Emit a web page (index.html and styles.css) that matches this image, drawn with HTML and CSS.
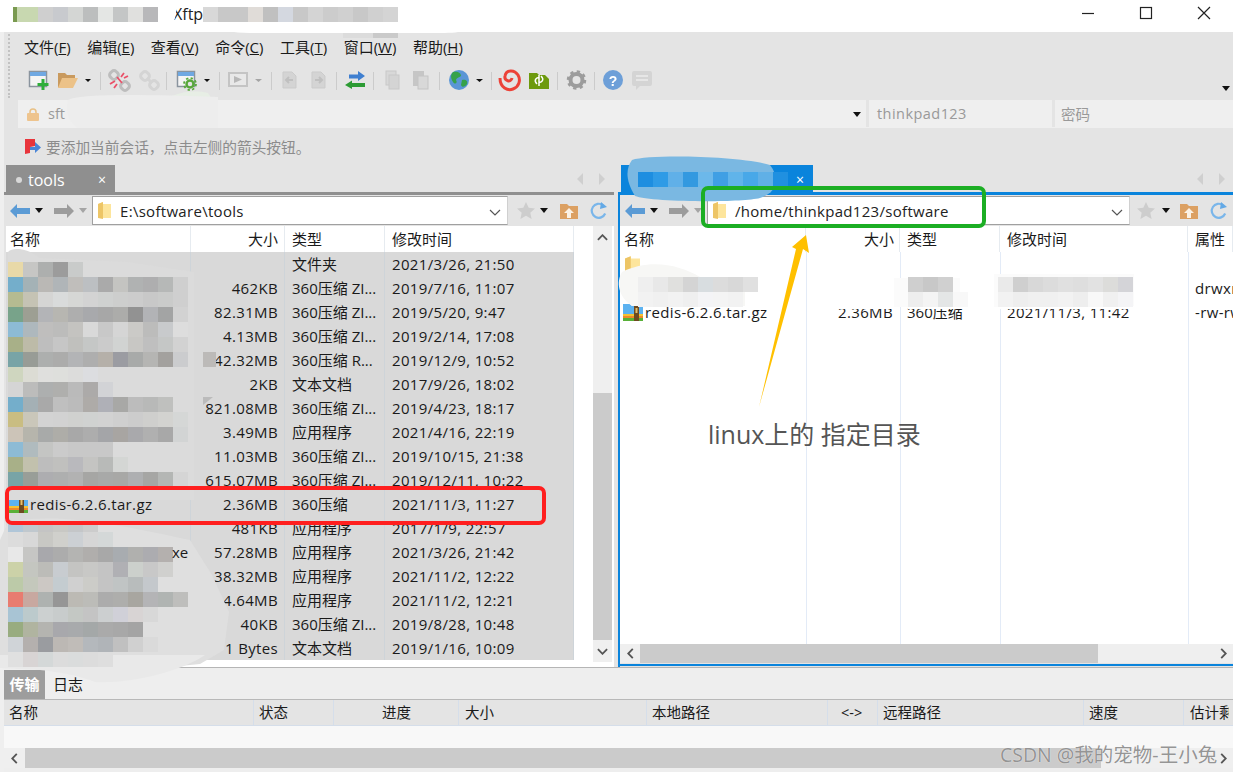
FILE: index.html
```html
<!DOCTYPE html>
<html lang="zh-CN">
<head>
<meta charset="utf-8">
<title>Xftp</title>
<link rel="stylesheet" href="styles.css">
</head>
<body>
<svg class="defs" width="0" height="0" aria-hidden="true">
  <defs>
    <symbol id="i-back" viewBox="0 0 20 14"><polygon points="0,7 7,0 7,4 20,4 20,10 7,10 7,14" fill="#5b9bd5"/></symbol>
    <symbol id="i-fwd" viewBox="0 0 20 14"><polygon points="20,7 13,0 13,4 0,4 0,10 13,10 13,14" fill="#9c9c9c"/></symbol>
    <symbol id="i-caret" viewBox="0 0 8 5"><polygon points="0,0 8,0 4,5" fill="#111"/></symbol>
    <symbol id="i-caret-g" viewBox="0 0 8 5"><polygon points="0,0 8,0 4,5" fill="#a5a5a5"/></symbol>
    <symbol id="i-folder" viewBox="0 0 13 17"><path d="M0 2 L5 0 L5 2 L13 2 L13 16 L0 16Z" fill="#fde59c"/><path d="M0 2 L5 0 L5 17 L0 16Z" fill="#edc566"/></symbol>
    <symbol id="i-chev" viewBox="0 0 12 7"><polyline points="1,1 6,6 11,1" fill="none" stroke="#555" stroke-width="1.2"/></symbol>
    <symbol id="i-star" viewBox="0 0 18 17"><polygon points="9,0 11.7,5.8 18,6.5 13.3,10.8 14.6,17 9,13.8 3.4,17 4.7,10.8 0,6.5 6.3,5.8" fill="#cdcdcd"/></symbol>
    <symbol id="i-home" viewBox="0 0 18 16"><path d="M0 1H7L9 3H18V16H0Z" fill="#dca062"/><polygon points="9,5 14,10 11,10 11,15 7,15 7,10 4,10" fill="#fbf1e4"/></symbol>
    <symbol id="i-refresh" viewBox="0 0 18 18"><path d="M15.2 11.5A7 7 0 1 1 13 3.2" fill="none" stroke="#7ab6ea" stroke-width="2.2"/><polygon points="11,0 17,5 10,7" fill="#63a9e6"/></symbol>
    <symbol id="i-zip" viewBox="0 0 20 18"><path d="M0 1H7L9 3H20V11H0Z" fill="#5cb2f0"/><rect y="11" width="20" height="2" fill="#f6c233"/><rect y="13" width="20" height="2" fill="#ef8a2a"/><rect y="15" width="20" height="3" fill="#58b038"/><rect x="11" width="5" height="18" fill="#6e4a20"/><rect x="12.500" y="5" width="2" height="5" fill="#e7c06a"/></symbol>
  </defs>
</svg>

<div class="app">
  <header class="titlebar">
    <span class="app-name">Xftp</span>
    <div class="win-controls">
      <svg class="win-btn" viewBox="0 0 14 14"><line x1="1" y1="7.5" x2="13" y2="7.5"/></svg>
      <svg class="win-btn" viewBox="0 0 14 14"><rect x="1.5" y="1.5" width="11" height="11"/></svg>
      <svg class="win-btn" viewBox="0 0 14 14"><path d="M1 1L13 13M13 1L1 13"/></svg>
    </div>
  </header>

  <nav class="menubar">
    <span class="grip"></span>
    <span class="menu-item">文件(<u>F</u>)</span>
    <span class="menu-item">编辑(<u>E</u>)</span>
    <span class="menu-item">查看(<u>V</u>)</span>
    <span class="menu-item">命令(<u>C</u>)</span>
    <span class="menu-item">工具(<u>T</u>)</span>
    <span class="menu-item">窗口(<u>W</u>)</span>
    <span class="menu-item">帮助(<u>H</u>)</span>
  </nav>

  <div class="toolbar">
    <span class="grip"></span>
    <svg class="tool-icons" viewBox="0 64 660 34" width="660" height="34">
      <g stroke="#cbcbcb"><path d="M100.500 72V90M166.500 72V90M219.500 72V90M271.500 72V90M336.500 72V90M373.500 72V90M439.500 72V90M491.500 72V90M557.500 72V90M594.500 72V90"/></g>
      <!-- new session -->
      <rect x="29.500" y="71.500" width="17" height="15" fill="#f4f4f4" stroke="#8a949e" stroke-width="1.500"/>
      <rect x="30" y="72" width="16" height="4" fill="#6fa8e2"/>
      <path d="M43 79V90M37.500 84.500H48.500" stroke="#2fae3a" stroke-width="3"/>
      <!-- open folder -->
      <path d="M58 73H65L67 75H75V79H64L58 88Z" fill="#c99a5e"/>
      <path d="M62 78H78L73 88H58Z" fill="#ecc288"/>
      <polygon points="85,79 91,79 88,82" fill="#111"/>
      <!-- disconnect -->
      <g fill="none" stroke="#bdbdbd" stroke-width="3"><rect x="110" y="71" width="8" height="8" rx="3" transform="rotate(45 114 75)"/><rect x="121" y="82" width="8" height="8" rx="3" transform="rotate(45 125 86)"/></g>
      <path d="M117 77L122 83M124 73L121 77M128 76L124 78M110 84L115 81M114 88L117 84" stroke="#ea5068" stroke-width="1.800"/>
      <!-- link -->
      <g fill="none" stroke="#d4d4d4" stroke-width="3"><rect x="141" y="72" width="8" height="8" rx="3" transform="rotate(45 145 76)"/><rect x="150" y="81" width="8" height="8" rx="3" transform="rotate(45 154 85)"/><path d="M147 78L152 83"/></g>
      <!-- session gear -->
      <rect x="177.500" y="71.500" width="17" height="15" fill="#f4f4f4" stroke="#8a949e" stroke-width="1.500"/>
      <rect x="178" y="72" width="16" height="4" fill="#6fa8e2"/>
      <circle cx="190" cy="84" r="3.500" fill="#e4e4e4" stroke="#58a83a" stroke-width="2.500"/>
      <circle cx="190" cy="84" r="6" fill="none" stroke="#58a83a" stroke-width="1.800" stroke-dasharray="2.300 2.400"/>
      <polygon points="204,79 210,79 207,82" fill="#111"/>
      <!-- play -->
      <rect x="229" y="73" width="18" height="13" fill="#e8e8e8" stroke="#c4c4c4" stroke-width="2"/>
      <polygon points="234,76 234,83 242,79.500" fill="#b8b8b8"/>
      <polygon points="255,79 262,79 258.500,82" fill="#a5a5a5"/>
      <!-- transfer docs -->
      <path d="M283 72H292L296 76V88H283Z" fill="#d4d4d4" stroke="#cbcbcb"/>
      <path d="M293 80H286M289 77L286 80L289 83" stroke="#c0c0c0" stroke-width="2" fill="none"/>
      <path d="M312 72H321L325 76V88H312Z" fill="#d4d4d4" stroke="#cbcbcb"/>
      <path d="M315 80H322M319 77L322 80L319 83" stroke="#c0c0c0" stroke-width="2" fill="none"/>
      <!-- swap -->
      <polygon points="345,85 352,80.500 352,83 365,83 365,87 352,87 352,89" fill="#2c9b34"/>
      <polygon points="349,74.500 358,74.500 358,71 365,76 358,81 358,78.500 349,78.500" fill="#3f7fd0"/>
      <!-- copy & paste -->
      <rect x="386" y="71" width="10" height="14" fill="#d8d8d8" stroke="#c8c8c8"/><rect x="389" y="75" width="10" height="14" fill="#d4d4d4" stroke="#c8c8c8"/>
      <rect x="413" y="71" width="11" height="15" fill="#c6c6c6"/><rect x="418" y="76" width="10" height="13" fill="#d8d8d8" stroke="#c4c4c4"/>
      <!-- globe -->
      <circle cx="459" cy="80" r="10" fill="#5a96d6"/>
      <path d="M453 72C458 71 461 73 461 76C459 78 457 77 456 80C458 83 455 85 453 82C451 79 450 75 453 72ZM462 80C466 79 468 81 467 84C465 87 462 88 461 85Z" fill="#36a24a"/>
      <polygon points="476,79 483,79 479.500,82" fill="#111"/>
      <!-- snail -->
      <path d="M500 78C500 88 508 91 513 89C519 87 521 80 518 75C514 69 506 70 505 76C504 81 511 83 512 78" fill="none" stroke="#ec4238" stroke-width="3"/>
      <!-- green folder -->
      <path d="M529 73H537L539 75H545L549 79V89H529Z" fill="#6d9a0d"/>
      <path d="M537 84C533 80 537 77 539 78M541 76C545 80 541 83 539 82M539 75V86" stroke="#fff" stroke-width="1.500" fill="none"/>
      <!-- gear -->
      <circle cx="576.500" cy="80" r="6" fill="none" stroke="#9c9c9c" stroke-width="4"/>
      <circle cx="576.500" cy="80" r="8.500" fill="none" stroke="#9c9c9c" stroke-width="2.500" stroke-dasharray="3.300 3.370"/>
      <!-- help -->
      <circle cx="613" cy="80" r="10" fill="#6d9fd8"/>
      <text class="help-mark" x="613" y="85.500" text-anchor="middle">?</text>
      <!-- comment -->
      <path d="M634 71H650Q652 71 652 73V84Q652 86 650 86H640L636 90V86H634Q632 86 632 84V73Q632 71 634 71Z" fill="#d4d4d4"/>
      <path d="M636 76H648M636 80H648" stroke="#ececec" stroke-width="1.500"/>
    </svg>
    <svg class="more-caret"><use href="#i-caret"/></svg>
  </div>

  <div class="addrbar">
    <div class="addr-field addr-host">
      <svg class="lock" viewBox="0 0 12 13"><path d="M3 6V4a3 3 0 0 1 6 0V6" fill="none" stroke="#e9c186" stroke-width="1.500"/><rect y="5" width="12" height="8" rx="1" fill="#eec48e"/></svg>
      <span>sft</span>
      <svg class="addr-caret"><use href="#i-caret"/></svg>
    </div>
    <div class="addr-field addr-user">thinkpad123</div>
    <div class="addr-field addr-pass">密码</div>
  </div>

  <div class="hint">
    <svg class="hint-icon" viewBox="0 0 16 15"><path d="M0 0H10V7L5 8V14L0 15Z" fill="#e8353c"/><polygon points="5,8 10,8 10,3 16,8.500 10,14 10,11 5,11" fill="#4a86d8"/></svg>
    <span>要添加当前会话，点击左侧的箭头按钮。</span>
  </div>

  <main class="panes">
    <section class="pane pane-left">
      <div class="tabrow">
        <div class="tab tab-local"><i class="tab-dot"></i><span class="tab-label">tools</span><span class="tab-x">×</span></div>
        <div class="tab-arrows"><b class="ar-l"></b><b class="ar-r"></b></div>
      </div>
      <div class="navrow">
        <svg class="n-arrow"><use href="#i-back"/></svg>
        <svg class="n-caret"><use href="#i-caret"/></svg>
        <svg class="n-arrow n-fwd"><use href="#i-fwd"/></svg>
        <svg class="n-caret"><use href="#i-caret-g"/></svg>
        <div class="pathbox">
          <svg class="p-folder"><use href="#i-folder"/></svg>
          <span class="p-text">E:\software\tools</span>
          <svg class="p-chev"><use href="#i-chev"/></svg>
        </div>
        <svg class="n-star"><use href="#i-star"/></svg>
        <svg class="n-caret"><use href="#i-caret"/></svg>
        <svg class="n-home"><use href="#i-home"/></svg>
        <svg class="n-refresh"><use href="#i-refresh"/></svg>
      </div>
      <div class="listwrap">
        <div class="list">
          <div class="row head cols-l"><span class="c-name">名称</span><span class="c-size">大小</span><span class="c-type">类型</span><span class="c-mod">修改时间</span></div>
          <div class="rows-sel">
            <div class="row cols-l"><span class="c-name"></span><span class="c-size"></span><span class="c-type">文件夹</span><span class="c-mod">2021/3/26, 21:50</span></div>
            <div class="row cols-l"><span class="c-name"></span><span class="c-size">462KB</span><span class="c-type">360压缩 ZI...</span><span class="c-mod">2019/7/16, 11:07</span></div>
            <div class="row cols-l"><span class="c-name"></span><span class="c-size">82.31MB</span><span class="c-type">360压缩 ZI...</span><span class="c-mod">2019/5/20, 9:47</span></div>
            <div class="row cols-l"><span class="c-name"></span><span class="c-size">4.13MB</span><span class="c-type">360压缩 ZI...</span><span class="c-mod">2019/2/14, 17:08</span></div>
            <div class="row cols-l"><span class="c-name"></span><span class="c-size">42.32MB</span><span class="c-type">360压缩 R...</span><span class="c-mod">2019/12/9, 10:52</span></div>
            <div class="row cols-l"><span class="c-name"></span><span class="c-size">2KB</span><span class="c-type">文本文档</span><span class="c-mod">2017/9/26, 18:02</span></div>
            <div class="row cols-l"><span class="c-name"></span><span class="c-size">821.08MB</span><span class="c-type">360压缩 ZI...</span><span class="c-mod">2019/4/23, 18:17</span></div>
            <div class="row cols-l"><span class="c-name"></span><span class="c-size">3.49MB</span><span class="c-type">应用程序</span><span class="c-mod">2021/4/16, 22:19</span></div>
            <div class="row cols-l"><span class="c-name"></span><span class="c-size">11.03MB</span><span class="c-type">360压缩 ZI...</span><span class="c-mod">2019/10/15, 21:38</span></div>
            <div class="row cols-l"><span class="c-name"></span><span class="c-size">615.07MB</span><span class="c-type">360压缩 ZI...</span><span class="c-mod">2019/12/11, 10:22</span></div>
            <div class="row cols-l"><span class="c-name with-icon"><svg class="zip"><use href="#i-zip"/></svg>redis-6.2.6.tar.gz</span><span class="c-size">2.36MB</span><span class="c-type">360压缩</span><span class="c-mod">2021/11/3, 11:27</span></div>
            <div class="row cols-l"><span class="c-name"></span><span class="c-size">481KB</span><span class="c-type">应用程序</span><span class="c-mod">2017/1/9, 22:57</span></div>
            <div class="row cols-l"><span class="c-name"></span><span class="c-size">57.28MB</span><span class="c-type">应用程序</span><span class="c-mod">2021/3/26, 21:42</span></div>
            <div class="row cols-l"><span class="c-name"></span><span class="c-size">38.32MB</span><span class="c-type">应用程序</span><span class="c-mod">2021/11/2, 12:22</span></div>
            <div class="row cols-l"><span class="c-name"></span><span class="c-size">4.64MB</span><span class="c-type">应用程序</span><span class="c-mod">2021/11/2, 12:21</span></div>
            <div class="row cols-l"><span class="c-name"></span><span class="c-size">40KB</span><span class="c-type">360压缩 ZI...</span><span class="c-mod">2019/8/28, 10:48</span></div>
            <div class="row cols-l"><span class="c-name"></span><span class="c-size">1 Bytes</span><span class="c-type">文本文档</span><span class="c-mod">2019/1/16, 10:09</span></div>
          </div>
        </div>
        <div class="vscroll">
          <div class="sb-btn"><svg class="sb-chev" viewBox="0 0 12 7"><polyline points="1,6 6,1 11,6"/></svg></div>
          <div class="vtrack"><div class="vthumb"></div></div>
          <div class="sb-btn"><svg class="sb-chev" viewBox="0 0 12 7"><polyline points="1,1 6,6 11,1"/></svg></div>
        </div>
      </div>
    </section>

    <section class="pane pane-right">
      <div class="tabrow">
        <div class="tab tab-remote"><span class="tab-x">×</span></div>
        <div class="tab-arrows"><b class="ar-l"></b><b class="ar-r"></b></div>
      </div>
      <div class="remote-body">
        <div class="navrow">
          <svg class="n-arrow"><use href="#i-back"/></svg>
          <svg class="n-caret"><use href="#i-caret"/></svg>
          <svg class="n-arrow n-fwd"><use href="#i-fwd"/></svg>
          <svg class="n-caret"><use href="#i-caret-g"/></svg>
          <div class="pathbox">
            <svg class="p-folder"><use href="#i-folder"/></svg>
            <span class="p-text">/home/thinkpad123/software</span>
            <svg class="p-chev"><use href="#i-chev"/></svg>
          </div>
          <svg class="n-star"><use href="#i-star"/></svg>
          <svg class="n-caret"><use href="#i-caret"/></svg>
          <svg class="n-home"><use href="#i-home"/></svg>
          <svg class="n-refresh"><use href="#i-refresh"/></svg>
        </div>
        <div class="list list-r">
          <div class="row head cols-r"><span class="c-name">名称</span><span class="c-size">大小</span><span class="c-type">类型</span><span class="c-mod">修改时间</span><span class="c-attr">属性</span></div>
          <div class="rows-r">
            <div class="row cols-r"><span class="c-name"><svg class="folder-big"><use href="#i-folder"/></svg></span><span></span><span></span><span></span><span></span></div>
            <div class="row cols-r"><span class="c-name"></span><span></span><span></span><span></span><span class="c-attr">drwxr-xr-x</span></div>
            <div class="row cols-r"><span class="c-name with-icon-r"><svg class="zip"><use href="#i-zip"/></svg>redis-6.2.6.tar.gz</span><span class="c-size">2.36MB</span><span class="c-type">360压缩</span><span class="c-mod">2021/11/3, 11:42</span><span class="c-attr">-rw-rw-r--</span></div>
          </div>
        </div>
        <div class="hscroll hscroll-r">
          <div class="sb-btn-h"><svg class="sb-chev-h" viewBox="0 0 7 12"><polyline points="6,1 1,6 6,11"/></svg></div>
          <div class="hthumb hthumb-r"></div>
          <div class="sb-rest"></div>
          <div class="sb-btn-h"><svg class="sb-chev-h" viewBox="0 0 7 12"><polyline points="1,1 6,6 1,11"/></svg></div>
        </div>
      </div>
    </section>
  </main>

  <section class="transfer">
    <div class="t-tabs"><span class="t-tab t-active">传输</span><span class="t-tab t-log">日志</span></div>
    <div class="t-head">
      <span class="t-c1">名称</span><span class="t-c2">状态</span><span class="t-c3">进度</span><span class="t-c4">大小</span><span class="t-c5">本地路径</span><span class="t-c6">&lt;-&gt;</span><span class="t-c7">远程路径</span><span class="t-c8">速度</span><span class="t-c9">估计剩余</span>
    </div>
    <div class="t-body"></div>
    <div class="hscroll hscroll-t">
      <div class="sb-btn-h sb-btn-t"><svg class="sb-chev-h" viewBox="0 0 7 12"><polyline points="6,1 1,6 6,11"/></svg></div>
      <div class="hthumb hthumb-t"></div>
      <div class="sb-rest"></div>
      <div class="sb-btn-h"><svg class="sb-chev-h" viewBox="0 0 7 12"><polyline points="1,1 6,6 1,11"/></svg></div>
    </div>
  </section>

  <svg class="overlay" viewBox="0 0 1233 772" width="1233" height="772">
    <!-- white / grey smears that hide private data -->
    <path d="M15 0H176C178 18 172 32 160 32H40C20 32 13 16 15 0Z" fill="#fff"/>
    <path d="M200 0H470V22C470 30 465 33 440 33H250C215 33 200 20 200 0Z" fill="#fff"/>
    <path d="M343 33H373V38H343Z" fill="#dcdcdc"/>
    <path d="M373 33H398V38H373Z" fill="#cacaca"/>
    <path d="M170 97C180 92 195 90 208 93L212 99H170Z" fill="#e7eee5"/>
    <path d="M68 100C85 93 150 95 218 97V128H78C68 122 65 110 68 100Z" fill="#ededed"/>
    <path d="M8 252C14 246 30 250 40 258L128 262L194 272V500H6Z" fill="#dbdbdb"/>
    <path d="M8 522C60 512 120 525 190 540L212 575L229 612L224 650L200 664C140 670 60 670 30 666L0 660V540Z" fill="#dfdfdf"/>
    <path d="M0 655H205C180 672 130 684 95 682C80 676 60 672 40 670L0 668Z" fill="#e9e9e9"/>
    <path d="M632 160C650 154 740 156 770 165C780 178 778 192 760 198C740 203 650 202 635 196C625 180 626 168 632 160Z" fill="#7ab8e2"/>
    <path d="M622 272C650 258 680 265 700 277L745 277V306H632C618 296 616 282 622 272Z" fill="#f7f7f5"/>
    <path d="M894 278H960V307H894ZM994 274H1134V307H994Z" fill="#fbfbfb"/>
    <path d="M838 302H893V309H838ZM908 306H968V309H908ZM998 306H1134V309H998Z" fill="#fff"/>
    <g id="mosaic" shape-rendering="crispEdges"></g>
    <polygon points="203,397 213,397 203,405" fill="#bbb"/>
    <text class="tail-text" x="172" y="558">xe</text>
    <!-- annotations -->
    <rect x="7" y="488" width="537" height="35" rx="5" class="mark mark-red"/>
    <rect x="703" y="188" width="281" height="38" rx="5" class="mark mark-green"/>
    <polygon points="806,235 809,253 803,249 759,407 796,249 792,247" fill="#ffc000"/>
  </svg>
  <div class="note">linux上的 指定目录</div>
  <div class="watermark">CSDN @我的宠物-王小兔</div>
</div>
<script src="mosaic.js"></script>
</body>
</html>
```
FILE: styles.css
```css
* { box-sizing: border-box; }
html, body { margin: 0; padding: 0; }
body { width: 1233px; height: 772px; overflow: hidden; background: #e4e4e4; font-family: "Open Sans", "Noto Sans CJK SC", sans-serif; color: #1a1a1a; }
.defs { position: absolute; }
.app { position: relative; width: 1233px; height: 772px; display: flex; flex-direction: column; background: #e4e4e4; border-left: 4px solid #efefef; }
svg { display: block; flex: none; }

/* title */
.titlebar { height: 32px; margin-left: -4px; background: #fff; display: flex; justify-content: flex-end; align-items: flex-start; position: relative; }
.app-name { position: absolute; left: 173px; top: 4px; font-size: 16px; line-height: 20px; color: #222; }
.win-controls { display: flex; gap: 44px; padding: 6px 22px 0 0; }
.win-btn { width: 14px; height: 14px; fill: none; stroke: #222; stroke-width: 1.2; }

/* menu */
.menubar { height: 32px; display: flex; align-items: center; padding: 0 0 4px 20px; gap: 16.500px; position: relative; font-size: 15px; }
.menu-item { white-space: nowrap; }
.grip { position: absolute; left: 4px; top: 2px; bottom: 0; border-left: 2px dotted #c2c2c2; }

/* toolbar */
.toolbar { height: 34px; position: relative; margin-left: -4px; }
.toolbar .grip { left: 8px; }
.tool-icons { filter: blur(.35px); }
.more-caret { position: absolute; right: 3px; top: 22px; width: 8px; height: 5px; }
.help-mark { font: bold 14px "Liberation Sans", sans-serif; fill: #fff; }

/* address */
.addrbar { height: 28px; margin: 2px 0 0 14px; display: flex; gap: 3px; padding-bottom: 1px; font-size: 14.500px; color: #999; background: linear-gradient(#efefef, #efefef) 0 27px/100% 1px no-repeat; }
.addr-field { background: #efefef; display: flex; align-items: center; }
.addr-host { width: 848px; position: relative; padding-left: 30px; }
.lock { position: absolute; left: 9px; top: 8px; width: 12px; height: 13px; }
.addr-caret { position: absolute; right: 5px; top: 12px; width: 8px; height: 5px; }
.addr-user { width: 183px; padding-left: 8px; letter-spacing: .45px; }
.addr-pass { flex: 1; padding-left: 6px; }

/* hint */
.hint { height: 37px; padding-left: 21px; display: flex; align-items: center; gap: 5px; font-size: 14.700px; color: #8c8c8c; }
.hint-icon { width: 16px; height: 15px; }

/* panes */
.panes { height: 502px; display: flex; }
.pane { display: flex; flex-direction: column; }
.pane-left { width: 610px; }
.pane-right { width: 615px; margin-left: 4px; }
.tabrow { height: 30px; display: flex; justify-content: space-between; border-bottom: 3px solid #8f8f8f; }
.pane-right .tabrow { border-bottom-color: #0a84dc; }
.tab { height: 27px; display: flex; align-items: center; color: #fff; font-size: 16px; position: relative; padding-top: 3px; }
.tab-local { width: 109px; margin-left: 2px; background: #8f8f8f; padding-left: 10px; }
.tab-dot { width: 6px; height: 6px; border-radius: 50%; background: #d8d8d8; margin-right: 6px; }
.tab-x { position: absolute; right: 9px; top: 5px; font-size: 14px; line-height: 20px; color: #fff; }
.tab-remote { width: 192px; margin-left: 3px; background: #0a84dc; }
.tab-arrows { display: flex; gap: 16px; padding: 8px 9px 0 0; }
.ar-l, .ar-r { width: 0; height: 0; border-top: 6px solid transparent; border-bottom: 6px solid transparent; }
.ar-l { border-right: 6px solid #cfcfcf; }
.ar-r { border-left: 6px solid #cfcfcf; }
.pane-right .tab-arrows { padding-right: 8px; }

.navrow { height: 31px; display: flex; align-items: center; padding-left: 6px; }
.n-arrow { width: 20px; height: 14px; }
.n-fwd { margin-left: 11px; }
.n-caret { width: 8px; height: 5px; margin-left: 5px; }
.pathbox { width: 416px; height: 29px; margin: 0 0 0 5px; background: #fff; border: 1px solid #a0a0a0; border-right-color: #d0d0d0; display: flex; align-items: center; position: relative; font-size: 15px; letter-spacing: .3px; color: #222; }
.p-folder { width: 13px; height: 17px; margin-left: 5px; }
.p-text { margin-left: 9px; }
.p-chev { position: absolute; right: 6px; top: 12px; width: 12px; height: 7px; }
.n-star { width: 18px; height: 17px; margin-left: 9px; }
.n-home { width: 18px; height: 16px; margin-left: 12px; }
.n-refresh { width: 18px; height: 18px; margin-left: 12px; }
.remote-body .n-star { margin-left: 7px; }
.remote-body .n-star + .n-caret { margin-left: 7px; }
.remote-body .n-home { margin-left: 10px; }

.listwrap { height: 441px; display: flex; margin-left: 2px; background: #fff; }
.list { width: 587px; font-size: 15px; letter-spacing: .35px; }
.row { height: 24px; display: grid; align-items: center; white-space: nowrap; line-height: 24px; }
.cols-l { grid-template-columns: 185px 94px 100px 189px; width: 568px; }
.cols-r { grid-template-columns: 186px 94px 100px 188px 45px; }
.row > span { height: 100%; overflow: hidden; }
.head { height: 26px; background: #fff; line-height: 26px; letter-spacing: 0; }
.head > span { border-right: 1px solid #e6ebf0; }
.c-name { padding-left: 4px; }
.c-size { text-align: right; padding-right: 6px; }
.c-type { padding-left: 7px; letter-spacing: 0; }
.c-mod { padding-left: 7px; }
.c-attr { padding-left: 7px; }
.cols-r .c-size { padding-right: 7px; }
.cols-r.head .c-size { padding-right: 5px; }
.with-icon { padding-left: 2px; display: flex; align-items: center; gap: 2px; }
.with-icon-r { padding-left: 3px; display: flex; align-items: center; gap: 2px; }
.zip { width: 20px; height: 18px; }
.folder-big { width: 15px; height: 20px; margin: 4px 0 0 1px; }
.rows-sel { background: #d9d9d9; width: 568px; height: 408px; }
.rows-sel .row > span { border-right: 1px solid #ced4d9; }

.vscroll { width: 19px; height: 436px; background: #efefef; display: flex; flex-direction: column; }
.sb-btn { height: 22px; display: flex; align-items: center; justify-content: center; }
.sb-chev { width: 11px; height: 7px; fill: none; stroke: #555; stroke-width: 2; }
.vtrack { flex: 1; padding-top: 145px; }
.vthumb { height: 247px; background: #cbcbcb; }

/* remote */
.remote-body { flex: 1; display: flex; flex-direction: column; border-left: 2px solid #0a84dc; }
.remote-body .navrow { padding-left: 5px; }
.remote-body .pathbox { width: 423px; }
.list-r { width: 100%; height: 418px; background: #fff; overflow: hidden; }
.rows-r { height: 392px; background: linear-gradient(#e3ebf7,#e3ebf7) 186px 0/1px 100% no-repeat, linear-gradient(#e3ebf7,#e3ebf7) 280px 0/1px 100% no-repeat, linear-gradient(#e3ebf7,#e3ebf7) 380px 0/1px 100% no-repeat, linear-gradient(#e3ebf7,#e3ebf7) 568px 0/1px 100% no-repeat; }
.hscroll { display: flex; background: #efefef; }
.hscroll-r { height: 19px; }
.pane-right .remote-body::after { content: ""; height: 2px; margin-top: 1px; background: #0a84dc; }
.sb-btn-h { width: 20px; display: flex; align-items: center; justify-content: center; flex: none; }
.sb-btn-t { width: 21px; }
.sb-chev-h { width: 7px; height: 11px; fill: none; stroke: #555; stroke-width: 2; }
.hthumb { background: #cbcbcb; flex: none; }
.hthumb-r { width: 458px; }
.hthumb-t { width: 1076px; }
.sb-rest { flex: 1; }

/* transfer */
.transfer { flex: 1; background: #eee; border-top: 1px solid #b5b5b5; display: flex; flex-direction: column; }
.t-tabs { height: 32px; display: flex; padding-top: 2px; border-bottom: 1px solid #b8b8b8; font-size: 15px; }
.t-tab { height: 29px; line-height: 28px; text-align: center; }
.t-active { width: 41px; background: #9d9d9d; color: #fff; font-weight: 700; }
.t-log { width: 46px; }
.t-head { height: 26px; background: #e4e4e4; border-bottom: 1px solid #d5deea; display: grid; grid-template-columns: 250px 80px 125px 188px 181px 50px 206px 100px 45px; font-size: 14.500px; line-height: 26px; white-space: nowrap; overflow: hidden; }
.t-head > span { border-right: 1px solid #d5deea; padding-left: 5px; overflow: hidden; }
.t-head > .t-c3 { text-align: right; padding-right: 47px; }
.t-head > .t-c4 { padding-left: 6px; }
.t-head > .t-c6 { padding-left: 13px; }
.t-head > .t-c9 { border-right: 0; padding-left: 6px; }
.t-body { height: 22px; background: #f8f8f8; }
.hscroll-t { height: 20px; }

/* overlay */
.overlay { position: absolute; left: -4px; top: 0; pointer-events: none; }
.tail-text { font: 15px "Open Sans", sans-serif; fill: #1a1a1a; }
.mark { fill: none; stroke-width: 4; }
.mark-red { stroke: #ff1f1f; }
.mark-green { stroke: #1cae24; }
.note { position: absolute; left: 704px; top: 416px; font-size: 25px; line-height: 36px; color: #555; white-space: nowrap; }
.watermark { position: absolute; left: 996px; top: 742px; font-size: 19.500px; line-height: 26px; color: rgba(120,120,120,.8); text-shadow: 0 0 1px #fff; white-space: nowrap; }
```
FILE: mosaic.js
```js
var blocks = [
  { x: 13, y: 7, w: 4, h: 15, rows: [["#7a9a50"]] },
  { x: 17, y: 7, w: 21, h: 15, rows: [["#c8d8b0"]] },
  { x: 38, y: 7, rows: [["#cfcfcf","#c8cace","#d4d6d4","#bcbebe","#e4e6e4","#c4c6c6","#e0e0de","#b8b8ba"]] },
  { x: 203, y: 7, rows: [["#d8d8d8","#c8c8c8","#c8c8c8","#e0dcd8","#c0c0c0","#d4d8e0","#c8c8c8","#d4d4d4","#cccccc","#d0d0d0","#c8c8c8","#d0d0d0","#d4d4d4"]] },
  { x: 638, y: 172, rows: [["#1e8ee0","#2f9be6","#60b0e8","#3399e0","#6cb8ea","#409fe4","#60b4ea","#48a8e8","#60b0e6","#2090e0"]] },
  { x: 203, y: 352, w: 13, h: 15, rows: [["#bcbab8"]] },
  { x: 8, y: 262, rows: [
    ["#e8d9a8","#c6c6c4","#adafae","#9c9c9c","#c9cbca"],
    ["#74aecb","#a4b2b6","#bab8b5","#b0b5b8","#c0bebb","#bcbfc2","#aaaaaa","#c4c4c1","#b0b2b2","#aeaeaf","#b6b8b7","#cfcfcf"],
    ["#b5bb91","#c5c3b4","#d5d5d4","#d9dbdb","#d6d7d5","#d3d3d3","#cfd1d0","#cdcecd","#cccccc","#c8c8c8","#cacbca","#cfcfcf"],
    ["#78a38a","#9d9f93","#b3b4b7","#b7b6b1","#aeaeae","#a8a9ac","#a7a7a7","#acacaa","#929292","#b2b3b6","#a3a4a4","#d2d2d2"],
    ["#8dbbd5","#aeb8bd","#bfbebd","#bcbcbb","#c4c3c0","#d9d9d9","#c8c8c8","#d5d5d5","#cbcac7","#bcbcbb","#c8cacc","#dddddd"],
    ["#a8b088","#bdbba8","#bebebe","#c6c6c6","#c0c0bd","#c5c7c6","#cbcbcb","#d1d3d2","#c8c7c4","#bfbfbf","#c5c7c6","#d2d2d2"],
    ["#78a4a6","#989c96","#adafae","#acacab","#b3b4b6","#aeaeae","#b5b0a9","#9b9ca2","#a8aaa9","#b5b5b3","#a3a19e","#cbccce"],
    ["#cfd6bf","#dcdcd4","#dfdfdd","#dedfdc","#dcdcdb","#dcdde0"],
    ["#d5d5d5","#bcbcbb","#adafaf","#afafad","#bababa","#acaaa9","#d2d3d6"],
    ["#74aecb","#a4b0b5","#a9a9a9","#bfbfbf","#bbbbbb","#aeaba8","#afb0b7","#a8a8a6","#bcbcbc","#b8b9b8","#bfc0be"],
    ["#c9bd82","#cac7ba","#d3d3d3","#d2d2d2","#d0d1cf","#d0d2d1","#d2d2d2","#cfcfcf","#cccccc","#cfcfcd","#d3d3d0","#d5d7d6"],
    ["#ccc4b8","#b6b5ac","#a8aaa9","#aeada8","#a8a8a8","#adadad","#a4a5a8","#a8a5a2","#a9a9ac","#b0b0b0","#a8a8a8","#d2d4d4"],
    ["#8dbbd5","#b0bbbe","#c4c5c3","#cbcbcb","#c8c8c8","#c8c8c8","#c8c8c8"],
    ["#a8b088","#c2c1ad","#bdbdbd","#c0c0be","#b9b9bd","#c4c4c2","#b8bab8","#d4d6d4"],
    ["#78a4a6","#999e98","#adadb0","#aeafaf","#b2b2b2","#a6a6a4","#a8a9a8","#a8a8a6","#aeafb1","#a6a6a4","#b4b6b4","#d5d5d5"]
  ] },
  { x: 8, y: 524, w: 15, h: 8, rows: [["#b0c6d8","#c0c8ce","#c4c4c4","#c8c8c4","#c4c6c8","#cccccc"]] },
  { x: 8, y: 532, rows: [
    ["#dcdcdc","#d8d8d8","#c8c8c4","#d0d0cc","#ccd0d4","#d6d6d6","#d4d8d8"],
    ["#e8e8e8","#c6c6c4","#a8a8ac","#acacac","#b4b4b2","#b0aeac","#a8a8a8","#a8acb0","#b0b0ae","#acacb0","#b4b0ae"],
    ["#ccd2a8","#c4c6c0","#bcbcb8","#c8ccd0","#c4c4c2","#c8c8c6","#c4c4c4","#b0b0b4","#ccd0cc","#c8c8c8","#d0d0ce"],
    ["#bccaa8","#c4c8bc","#ccc8c4","#c4ccd0","#d0d0d0","#ccccc8","#c4c4c4","#c0c4c4","#b8bcbc","#c4c8cc"],
    ["#e87c70","#c8a8a0","#aeb2b0","#969696","#bcbab4","#bcbcb8","#acacac","#aeaeac","#a8a6a0","#b4b4b6","#b0b4b2","#bebebc"],
    ["#a8c4d4","#bccacc","#ccd0d0","#c8cccc","#c4c8c4","#c4c4c4","#cccfd0","#d0d0d8","#d8d4d4","#d8d8d8"],
    ["#98ac80","#b0b4a0","#b4b4b0","#a8a8ac","#a8aaac","#a4a8a8","#aaaaaa","#a8a8a8","#a4a4a4"],
    ["#d0d4d8","#b4b0ae","#9a9ca0","#bcb8b4","#c0bcb8","#b4b8bc","#b0b4b8","#c0c0c0","#d0d0d0","#dadada"],
    ["#e0e0e0","#d8d4d4","#d4d8d8","#dcdcdc","#dadcdc","#dcdcdc","#dedede"]
  ] },
  { x: 638, y: 277, rows: [
    ["#efefef","#e8e8e8","#e0e0de","#d4d4d4","#d8dde0","#dcdcdc","#d8d8d8","#e0e0e0"],
    ["#f2f2f2","#f0f0f0","#f2f2f2","#efefef","#f4f4f6","#f4f4f4","#f2f2f2"]
  ] },
  { x: 908, y: 277, rows: [["#cfcfcf","#c8c8c8","#d0d0d0"],["#eeeeee","#f4f4f4","#e4e6e6","#f8f8f8"]] },
  { x: 998, y: 277, rows: [
    ["#eaeaea","#cfcfcf","#d8d8d8","#dcdcdc","#e0e0e0","#dedede","#e2e2e2","#dcdcda","#d4d4d8"],
    ["#f2f2f2","#eeeeee","#f0f0f0","#f0f0f0","#f2f2f2","#eeeeee","#f8f8f8","#f0f0f0","#f4f4f6"]
  ] }
];
var target = document.getElementById("mosaic");
var NS = "http://www.w3.org/2000/svg";
blocks.forEach(function (b) {
  var w = b.w || 15, h = b.h || 15;
  b.rows.forEach(function (row, r) {
    row.forEach(function (color, c) {
      var el = document.createElementNS(NS, "rect");
      el.setAttribute("x", b.x + c * w);
      el.setAttribute("y", b.y + r * h);
      el.setAttribute("width", w);
      el.setAttribute("height", h);
      el.setAttribute("fill", color);
      target.appendChild(el);
    });
  });
});
```
